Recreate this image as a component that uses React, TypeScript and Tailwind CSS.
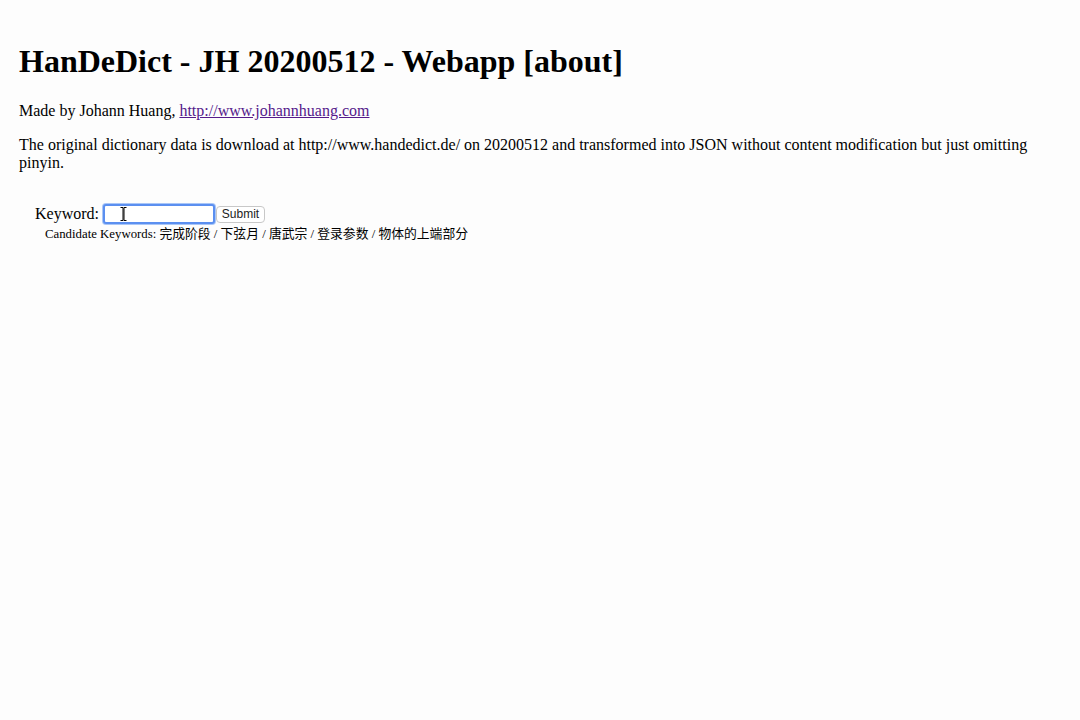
const App = () => {
  return (
    <main className="min-h-screen bg-[#fdfdfd] px-[19px] pt-[43px] text-black font-['Liberation_Serif',serif]">
      <h1 className="text-[32px] font-bold leading-[37px]">HanDeDict - JH 20200512 - Webapp [about]</h1>
      <p className="mt-[22px] text-[16px] leading-[18px]">
        Made by Johann Huang,{" "}
        <a href="#" className="text-[#551a8b] underline">http://www.johannhuang.com</a>
      </p>
      <p className="mt-[16px] text-[16px] leading-[18px]">
        The original dictionary data is download at http://www.handedict.de/ on 20200512 and transformed into JSON without content modification but just omitting pinyin.
      </p>

      {/* search form */}
      <form className="mt-[32px] pl-[16px]" onSubmit={(e) => e.preventDefault()}>
        <div className="flex items-center h-[20px]">
          <label className="text-[16px] leading-[18px] mr-[4px]">Keyword:</label>
          <div className="relative">
            <input
              type="text"
              className="w-[112px] h-[20px] border-2 border-[#5b8ff0] rounded-[3px] bg-white shadow-[0_0_0_1px_#a9c6f7] outline-none"
            />
            <svg className="absolute left-[17px] top-[5px]" width="7" height="14" viewBox="0 0 7 14">
              <path d="M0.5 0.5h2.5v13h-2.5M6.5 0.5h-2.5v13h2.5" fill="none" stroke="#000" strokeWidth="1" />
            </svg>
          </div>
          <button
            type="submit"
            className="ml-[1px] w-[49px] h-[17px] border border-[#c8c8c8] rounded-[4px] bg-white text-[12px] leading-[15px] text-[#222] font-['Liberation_Sans',sans-serif]"
          >
            Submit
          </button>
        </div>
        <div className="pl-[10px] mt-[2px] text-[12.8px] leading-[16px] font-['Liberation_Serif','Noto_Sans_CJK_SC',serif]">
          Candidate Keywords: 完成阶段 / 下弦月 / 唐武宗 / 登录参数 / 物体的上端部分
        </div>
      </form>
    </main>
  );
};

export default App;
